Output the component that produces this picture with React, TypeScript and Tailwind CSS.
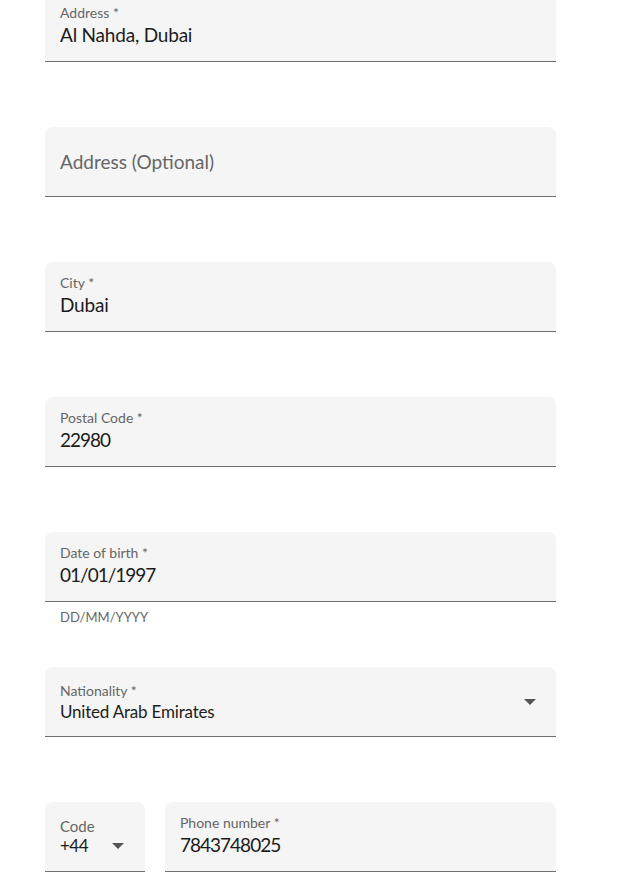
import React from 'react';

const font = { fontFamily: 'Lato, "Noto Sans", sans-serif' };

const Caret = () => (
  <svg width="12" height="6" viewBox="0 0 12 6" className="shrink-0">
    <path d="M0 0 L12 0 L6 6 Z" fill="#555555" />
  </svg>
);

interface FieldProps {
  label?: string;
  value?: string;
  placeholder?: string;
  helper?: string;
  numeric?: boolean;
}

const Field: React.FC<FieldProps> = ({ label, value, placeholder, helper, numeric }) => (
  <div className="h-[135px]">
    <div className="h-[70px] bg-[#f5f5f5] rounded-t-lg border-b border-[#6f6f6f] px-[15px]">
      {placeholder ? (
        <div className="pt-[22px] text-[19px] leading-[26px] text-[#666666]">{placeholder}</div>
      ) : (
        <div className="flex flex-col pt-[12px]">
          <span className="text-[14px] leading-[18px] text-[#666666]">{label}</span>
          <span
            className={`text-[19px] leading-[26px] text-[#1c1c1c] ${
              numeric ? 'tracking-[-1px]' : 'tracking-[-0.2px]'
            }`}
          >
            {value}
          </span>
        </div>
      )}
    </div>
    {helper && <div className="px-[15px] pt-[6px] text-[13px] leading-[18px] text-[#666666]">{helper}</div>}
  </div>
);

export default function App() {
  return (
    <div className="w-[637px] h-[874px] overflow-hidden bg-white" style={font}>
      <div className="w-[511px] ml-[45px] -mt-2">
        <Field label="Address *" value="Al Nahda, Dubai" />
        <Field placeholder="Address (Optional)" />
        <Field label="City *" value="Dubai" />
        <Field label="Postal Code *" value="22980" numeric />
        <Field label="Date of birth *" value="01/01/1997" helper="DD/MM/YYYY" numeric />

        <div className="h-[135px]">
          <div className="h-[70px] bg-[#f5f5f5] rounded-t-lg border-b border-[#6f6f6f] pl-[15px] pr-[20px] flex items-center">
            <div className="flex flex-col pt-[2px] flex-1">
              <span className="text-[14px] leading-[18px] text-[#666666]">Nationality *</span>
              <span className="text-[17px] leading-[24px] text-[#1c1c1c] tracking-[-0.2px]">United Arab Emirates</span>
            </div>
            <Caret />
          </div>
        </div>

        <div className="flex gap-[20px]">
          <div className="w-[100px] h-[70px] bg-[#f5f5f5] rounded-t-lg border-b border-[#6f6f6f] pl-[15px] pr-[21px] flex flex-col pt-[14px]">
            <span className="text-[15px] leading-[20px] text-[#666666]">Code</span>
            <div className="flex items-center justify-between">
              <span className="text-[17px] leading-[20px] text-[#1c1c1c] tracking-[-0.5px]">+44</span>
              <Caret />
            </div>
          </div>
          <div className="flex-1 h-[70px] bg-[#f5f5f5] rounded-t-lg border-b border-[#6f6f6f] px-[15px] flex flex-col pt-[12px]">
            <span className="text-[14px] leading-[18px] text-[#666666]">Phone number *</span>
            <span className="text-[19px] leading-[26px] text-[#1c1c1c] tracking-[-1px]">7843748025</span>
          </div>
        </div>
      </div>
    </div>
  );
}
